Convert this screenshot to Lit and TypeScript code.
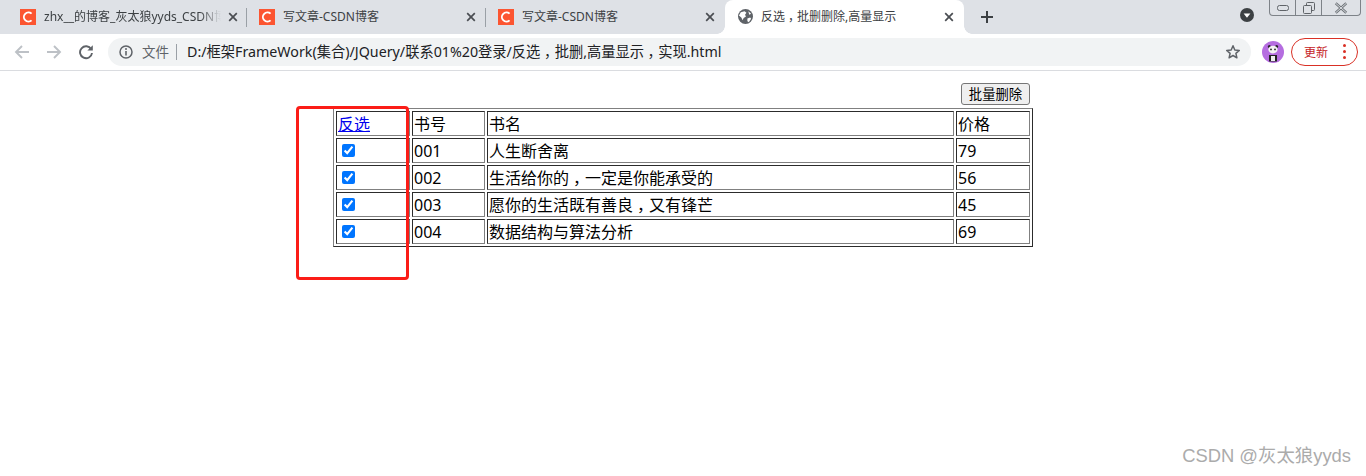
import { LitElement, html, css } from "lit";
import { customElement } from "lit/decorators.js";

const rows = [
  ["001", "人生断舍离", "79"],
  ["002", "生活给你的，一定是你能承受的", "56"],
  ["003", "愿你的生活既有善良，又有锋芒", "45"],
  ["004", "数据结构与算法分析", "69"],
];

const tabs = [
  { title: "zhx__的博客_灰太狼yyds_CSDN博客", fade: true, sep: true },
  { title: "写文章-CSDN博客", fade: false, sep: true },
  { title: "写文章-CSDN博客", fade: false, sep: false },
];

/* The reference font sets the full-width comma in the middle of its box. */
const cjk = (s: string) =>
  s.split("，").map((part, i) => (i === 0 ? part : html`<span class="comma">，</span>${part}`));

const favicon = html`<svg class="fav" viewBox="0 0 16 16" width="16" height="16">
  <rect width="16" height="16" fill="#fc5531"/>
  <path d="M11.6 4.6A4.6 4.6 0 1 0 11.6 11.4" fill="none" stroke="#fff" stroke-width="1.9"/>
</svg>`;

const closeIcon = html`<svg class="close" viewBox="0 0 10 10" width="10" height="10">
  <path d="M1.2 1.2L8.8 8.8M8.8 1.2L1.2 8.8" stroke="#4a4d52" stroke-width="1.7" fill="none"/>
</svg>`;

@customElement("app-root")
export class AppRoot extends LitElement {
  static styles = css`
    :host {
      display: block;
      position: relative;
      width: 1366px;
      height: 476px;
      overflow: hidden;
      background: #fff;
      font-family: "Noto Sans", "Noto Sans CJK SC", sans-serif;
      color: #000;
    }
    .comma {
      font-feature-settings: "halt";
      padding: 0 0.25em;
    }
    .strip {
      display: flex;
      height: 34px;
      padding-left: 8px;
      background: #dee1e6;
      box-sizing: border-box;
    }
    .tab {
      position: relative;
      flex: none;
      width: 239px;
      height: 34px;
      box-sizing: border-box;
      display: flex;
      align-items: center;
      padding: 0 10px 0 12px;
      font-size: 12px;
      color: #3c4043;
    }
    .tab.sep::after {
      content: "";
      position: absolute;
      right: 0;
      top: 8px;
      height: 19px;
      width: 1px;
      background: #9aa0a6;
    }
    .tab.active {
      background: #fff;
      border-radius: 8px 8px 0 0;
      padding-left: 13px;
    }
    .tab.active::before,
    .tab.active::after {
      content: "";
      position: absolute;
      bottom: 0;
      width: 8px;
      height: 8px;
    }
    .tab.active::before {
      left: -8px;
      background: radial-gradient(circle at 0 0, #dee1e6 7.5px, #fff 8px);
    }
    .tab.active::after {
      right: -8px;
      background: radial-gradient(circle at 100% 0, #dee1e6 7.5px, #fff 8px);
    }
    .fav { flex: none; margin-top: -1px; }
    .title {
      flex: 1;
      min-width: 0;
      margin: -1px 6px 0 8px;
      white-space: nowrap;
      line-height: 16px;
      overflow: hidden;
    }
    .title.fade {
      flex: none;
      width: 177px;
      margin-right: 7px;
      -webkit-mask-image: linear-gradient(90deg, #000 88%, transparent 100%);
      mask-image: linear-gradient(90deg, #000 88%, transparent 100%);
    }
    .close { flex: none; margin-top: -1px; }
    .plus { flex: none; margin: 10px 0 0 16px; }
    .grow { flex: 1; }
    .menu {
      flex: none;
      margin: 8px 15px 0 0;
    }
    .win {
      flex: none;
      display: flex;
      width: 92px;
      height: 16px;
      margin-right: 5px;
      box-sizing: border-box;
      border: 1px solid #7d8288;
      border-top: 0;
      border-radius: 0 0 4px 4px;
    }
    .win div {
      display: flex;
      align-items: center;
      justify-content: center;
      border-left: 1px solid #7d8288;
    }
    .win div:first-child { width: 25px; border-left: 0; }
    .win div:nth-child(2) { width: 25px; }
    .win div:nth-child(3) { flex: 1; }
    .bar {
      display: flex;
      align-items: center;
      height: 37px;
      box-sizing: border-box;
      border-bottom: 1px solid #dadce0;
      background: #fff;
      padding: 0 8px 1px 14px;
    }
    .nav { flex: none; margin-right: 16px; display: block; }
    .nav.last { margin-right: 14px; }
    .omni {
      flex: none;
      width: 1143px;
      height: 28px;
      display: flex;
      align-items: center;
      background: #f1f3f4;
      border-radius: 14px;
      box-sizing: border-box;
      padding: 0 10px 0 11px;
      font-size: 14.25px;
      color: #202124;
    }
    .file {
      margin-left: 9px;
      font-size: 13.5px;
      color: #5f6368;
      padding-right: 7px;
      border-right: 1px solid #9aa0a6;
      line-height: 16px;
      height: 16px;
    }
    .url { margin-left: 10px; white-space: nowrap; flex: 1; line-height: 18px; }
    .avatar { flex: none; margin-left: 11px; }
    .update {
      flex: none;
      margin-left: 7px;
      width: 67px;
      height: 28px;
      box-sizing: border-box;
      border: 1px solid #d93025;
      border-radius: 14px;
      display: flex;
      align-items: center;
      padding: 0 11px 0 12px;
      font-size: 12px;
      color: #c5221f;
      justify-content: space-between;
    }
    .dots { display: flex; flex-direction: column; gap: 3px; }
    .dots i { width: 3px; height: 3px; border-radius: 50%; background: #d93025; display: block; }
    .page {
      width: 700px;
      margin: 0 auto;
      padding-top: 12px;
      display: flex;
      flex-direction: column;
    }
    .actions {
      display: flex;
      justify-content: flex-end;
      padding-right: 3px;
      margin-bottom: 3px;
    }
    button {
      height: 22px;
      width: 69px;
      padding: 0;
      font: 13.33px "Noto Sans CJK SC", sans-serif;
      line-height: 18px;
      color: #000;
      background: #efefef;
      border: 1px solid #767676;
      border-radius: 3px;
    }
    table {
      width: 700px;
      table-layout: fixed;
      border-collapse: separate;
      border-spacing: 2px;
      border: 1px outset gray;
      font-size: 16px;
      line-height: 21px;
    }
    td {
      border: 1px inset gray;
      padding: 2px 1px 0;
      height: 21px;
      box-sizing: content-box;
      white-space: nowrap;
      overflow: hidden;
      vertical-align: middle;
    }
    .c1 { width: 74px; }
    .c2 { width: 73px; }
    .c4 { width: 74px; }
    a { color: #0000ee; text-decoration: underline; }
    input {
      display: block;
      width: 13px;
      height: 13px;
      margin: 3px 0 5px 4px;
    }
    .mark {
      position: absolute;
      left: 296px;
      top: 106px;
      width: 113px;
      height: 174px;
      box-sizing: border-box;
      border: 3px solid #fb1d17;
      border-radius: 4px;
      pointer-events: none;
    }
    .water {
      position: absolute;
      right: 15px;
      top: 443px;
      font: 18.4px/26px "Liberation Sans", "Noto Sans CJK SC", sans-serif;
      color: #ababab;
      white-space: nowrap;
    }
  `;

  render() {
    return html`
      <div class="strip">
        ${tabs.map(
          (t) => html`<div class="tab ${t.sep ? "sep" : ""}">
            ${favicon}
            <span class="title ${t.fade ? "fade" : ""}">${t.title}</span>
            ${closeIcon}
          </div>`
        )}
        <div class="tab active">
          <svg class="fav" viewBox="0 0 16 16" width="15" height="15">
            <circle cx="8" cy="8" r="8" fill="#5f6368"/>
            <path d="M3 3.5L7 2.5L9 4L7.5 6L8.5 8L6 9.5L5 12L3.5 9L1 7ZM10 10L13 9L14 10.5L11.5 14L10 13ZM11 2.5L14 5L12 6Z" fill="#fff"/>
          </svg>
          <span class="title">${cjk("反选，批删删除,高量显示")}</span>
          ${closeIcon}
        </div>
        <svg class="plus" viewBox="0 0 14 14" width="14" height="14">
          <path d="M7 1V13M1 7H13" stroke="#3c4043" stroke-width="2" fill="none"/>
        </svg>
        <div class="grow"></div>
        <svg class="menu" viewBox="0 0 14 14" width="14" height="14">
          <circle cx="7" cy="7" r="7" fill="#3c4043"/>
          <path d="M3.6 5.4H10.4L7 9.8Z" fill="#fff"/>
        </svg>
        <div class="win">
          <div>
            <svg viewBox="0 0 12 6" width="12" height="6"><rect x="0.5" y="0.5" width="11" height="5" rx="2" fill="none" stroke="#5f6368"/></svg>
          </div>
          <div>
            <svg viewBox="0 0 12 12" width="12" height="12">
              <rect x="3.5" y="0.5" width="8" height="8" rx="1" fill="none" stroke="#5f6368"/>
              <rect x="0.5" y="3.5" width="8" height="8" rx="1" fill="#dee1e6" stroke="#5f6368"/>
            </svg>
          </div>
          <div>
            <svg viewBox="0 0 12 10" width="14" height="12">
              <path d="M1.5 1L10.5 9M10.5 1L1.5 9" stroke="#70757a" stroke-width="2.2" fill="none"/>
              <path d="M1.5 1L10.5 9M10.5 1L1.5 9" stroke="#dee1e6" stroke-width="0.8" fill="none"/>
            </svg>
          </div>
        </div>
      </div>
      <div class="bar">
        <svg class="nav" viewBox="0 0 16 16" width="16" height="16">
          <path d="M15 8H2M8 2L2 8L8 14" fill="none" stroke="#bdc1c6" stroke-width="1.9"/>
        </svg>
        <svg class="nav" viewBox="0 0 16 16" width="16" height="16">
          <path d="M1 8H14M8 2L14 8L8 14" fill="none" stroke="#bdc1c6" stroke-width="1.9"/>
        </svg>
        <svg class="nav last" viewBox="0 0 16 16" width="16" height="16">
          <path d="M13.2 5.2A6 6 0 1 0 14 9" fill="none" stroke="#5f6368" stroke-width="1.9"/>
          <path d="M14.8 1.2V6.6H9.4Z" fill="#5f6368"/>
        </svg>
        <div class="omni">
          <svg viewBox="0 0 14 14" width="14" height="14" style="flex:none">
            <circle cx="7" cy="7" r="6" fill="none" stroke="#5f6368" stroke-width="1.5"/>
            <path d="M7 6V10.5" stroke="#5f6368" stroke-width="1.6"/>
            <circle cx="7" cy="4" r="1" fill="#5f6368"/>
          </svg>
          <span class="file">文件</span>
          <span class="url">${cjk("D:/框架FrameWork(集合)/JQuery/联系01%20登录/反选，批删,高量显示，实现.html")}</span>
          <svg viewBox="0 0 16 16" width="16" height="16" style="flex:none">
            <path d="M8 1.8L9.8 6L14.3 6.4L10.9 9.4L11.9 13.8L8 11.5L4.1 13.8L5.1 9.4L1.7 6.4L6.2 6Z" fill="none" stroke="#5f6368" stroke-width="1.5" stroke-linejoin="round"/>
          </svg>
        </div>
        <svg class="avatar" viewBox="0 0 22 22" width="22" height="22">
          <circle cx="11" cy="11" r="11" fill="#b56de0"/>
          <path d="M7 14H15V20.5H7Z" fill="#222"/>
          <circle cx="7.4" cy="5.4" r="1.5" fill="#222"/>
          <circle cx="14.6" cy="5.4" r="1.5" fill="#222"/>
          <ellipse cx="11" cy="8.6" rx="4.6" ry="3.9" fill="#f4f4f4"/>
          <circle cx="9" cy="8.4" r="0.9" fill="#222"/>
          <circle cx="13" cy="8.4" r="0.9" fill="#222"/>
          <path d="M9 15H13V20H9Z" fill="#eee"/>
        </svg>
        <div class="update">
          <span>更新</span>
          <span class="dots"><i></i><i></i><i></i></span>
        </div>
      </div>
      <div class="page">
        <div class="actions"><button>批量删除</button></div>
        <table>
          <colgroup>
            <col class="c1" />
            <col class="c2" />
            <col />
            <col class="c4" />
          </colgroup>
          <tr>
            <td><a href="#">反选</a></td>
            <td>书号</td>
            <td>书名</td>
            <td>价格</td>
          </tr>
          ${rows.map(
            (r) => html`<tr>
              <td><input type="checkbox" checked /></td>
              <td>${r[0]}</td>
              <td>${cjk(r[1])}</td>
              <td>${r[2]}</td>
            </tr>`
          )}
        </table>
      </div>
      <div class="mark"></div>
      <div class="water">CSDN @灰太狼yyds</div>
    `;
  }
}
